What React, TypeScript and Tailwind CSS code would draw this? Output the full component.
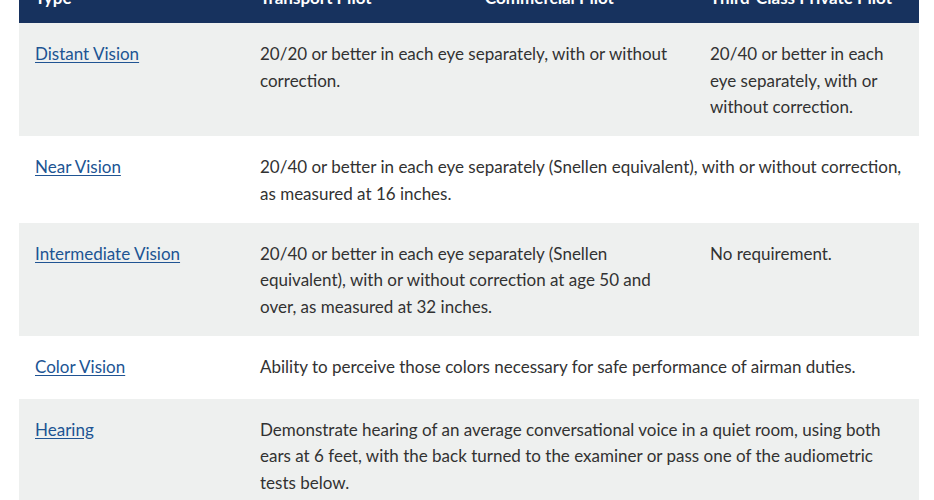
import React from "react";

const font = { fontFamily: "'Source Sans Pro', Lato, sans-serif" };

type Row = {
  name: string;
  cells: { text: React.ReactNode; span?: number }[];
  gray: boolean;
  minH?: string;
};

const rows: Row[] = [
  {
    name: "Distant Vision",
    gray: true,
    cells: [
      { text: <>20/20 or better in each eye separately, with or without<br />correction.</>, span: 2 },
      { text: <>20/40 or better in each<br />eye separately, with or<br />without correction.</> },
    ],
  },
  {
    name: "Near Vision",
    gray: false,
    cells: [
      {
        text: <>20/40 or better in each eye separately (Snellen equivalent), with or without correction,<br />as measured at 16 inches.</>,
        span: 3,
      },
    ],
  },
  {
    name: "Intermediate Vision",
    gray: true,
    cells: [
      { text: <>20/40 or better in each eye separately (Snellen<br />equivalent), with or without correction at age 50 and<br />over, as measured at 32 inches.</>, span: 2 },
      { text: <>No requirement.</> },
    ],
  },
  {
    name: "Color Vision",
    gray: false,
    minH: "min-h-[63px]",
    cells: [
      { text: <>Ability to perceive those colors necessary for safe performance of airman duties.</>, span: 3 },
    ],
  },
  {
    name: "Hearing",
    gray: true,
    cells: [
      {
        text: <>Demonstrate hearing of an average conversational voice in a quiet room, using both<br />ears at 6 feet, with the back turned to the examiner or pass one of the audiometric<br />tests below.</>,
        span: 3,
      },
    ],
  },
];

const spanClass: Record<number, string> = { 1: "col-span-1", 2: "col-span-2", 3: "col-span-3" };

export default function App() {
  return (
    <div className="w-[934px] h-[500px] overflow-hidden bg-white" style={font}>
      <div className="px-[19px] w-[938px] -mt-[16px]">
        {/* Header */}
        <div className="grid grid-cols-[225px_225px_225px_225px] bg-[#17325e] text-white font-bold text-[17px] leading-[27px] whitespace-nowrap">
          <div className="px-4 pb-[12px]">Type</div>
          <div className="px-4 pb-[12px]">Transport Pilot</div>
          <div className="px-4 pb-[12px]">Commercial Pilot</div>
          <div className="px-4 pb-[12px]">Third-Class Private Pilot</div>
        </div>

        {rows.map((r) => (
          <div
            key={r.name}
            className={`grid grid-cols-[225px_225px_225px_225px] text-[17px] leading-[26.7px] text-[#323232] ${
              r.gray ? "bg-[#eef0ef]" : "bg-white"
            } ${r.minH ?? ""}`}
          >
            <div className="px-4 pt-[18px] pb-[15px]">
              <a href="#" className="text-[#205493] underline underline-offset-2">
                {r.name}
              </a>
            </div>
            {r.cells.map((c, i) => (
              <div key={i} className={`px-4 pt-[18px] pb-[15px] whitespace-nowrap ${spanClass[c.span ?? 1]}`}>
                {c.text}
              </div>
            ))}
          </div>
        ))}
      </div>
    </div>
  );
}
